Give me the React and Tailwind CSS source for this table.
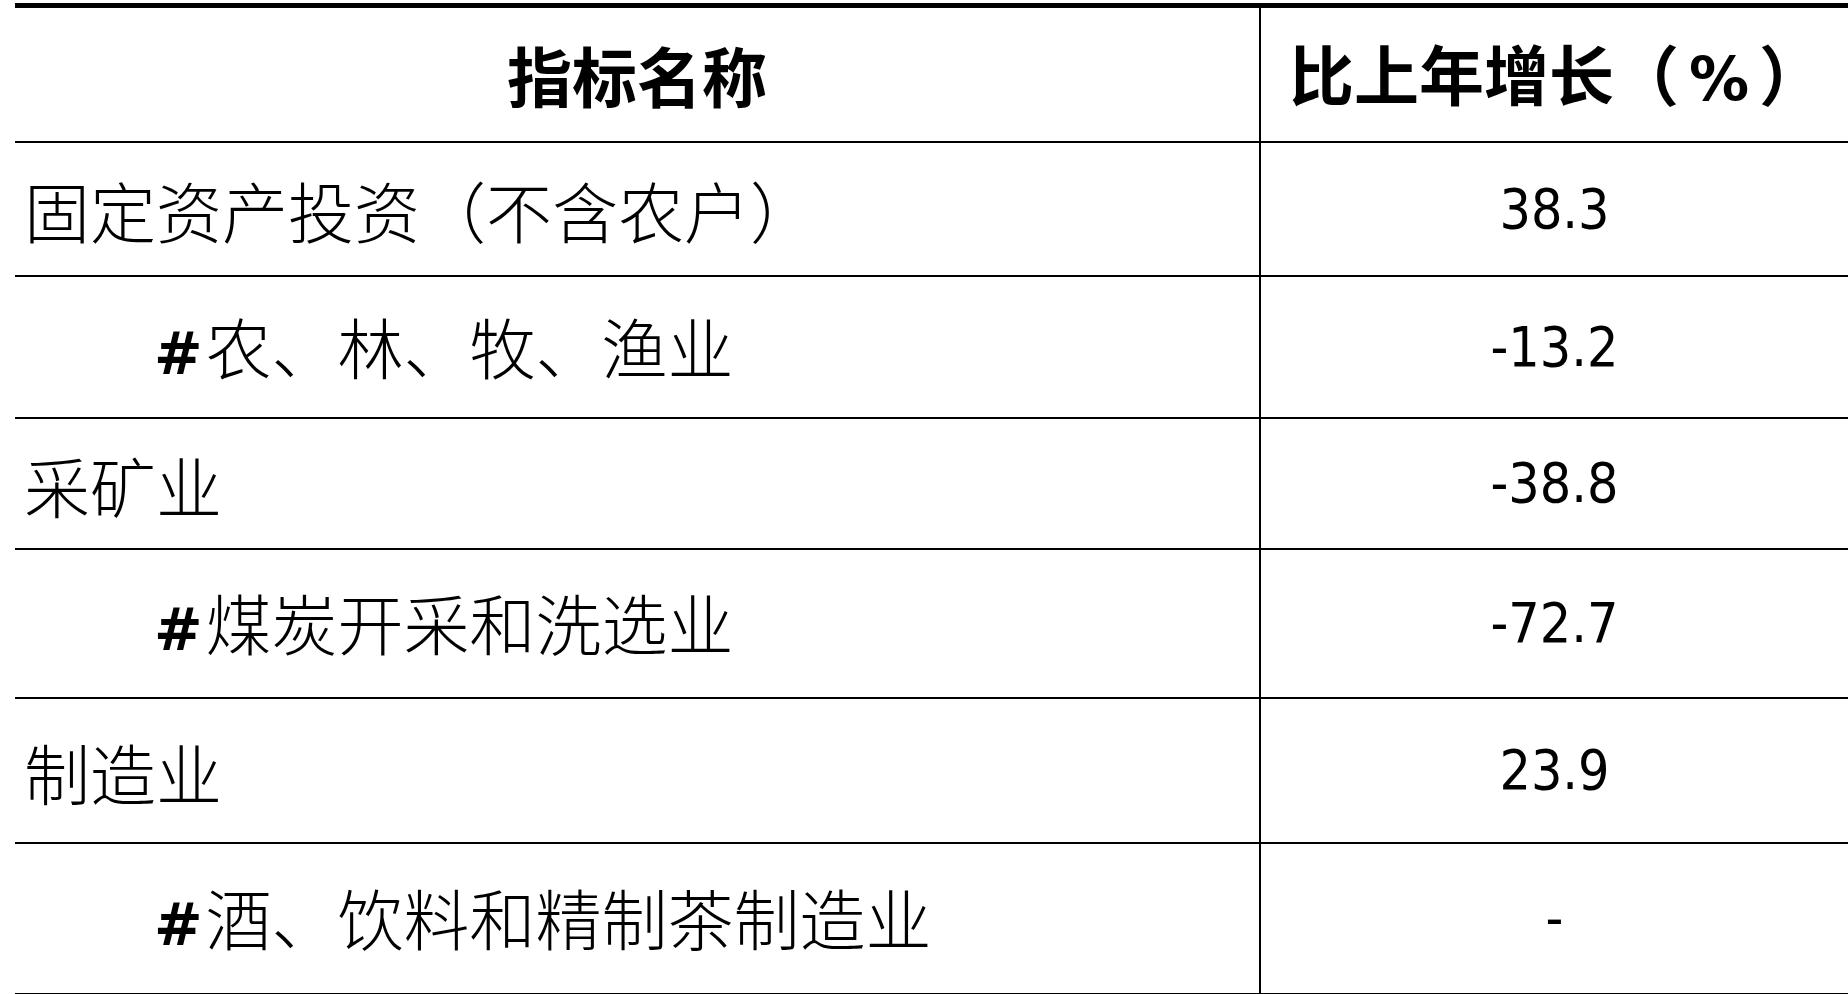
import React from "react";

const rows = [
  { name: "固定资产投资（不含农户）", value: "38.3", h: "h-[134px]" },
  { name: "农、林、牧、渔业", value: "-13.2", sub: true, h: "h-[142px]" },
  { name: "采矿业", value: "-38.8", h: "h-[131px]" },
  { name: "煤炭开采和洗选业", value: "-72.7", sub: true, h: "h-[149px]" },
  { name: "制造业", value: "23.9", h: "h-[145px]" },
  { name: "酒、饮料和精制茶制造业", value: "-", sub: true, h: "h-[151px]" },
];

const cjk = "font-['Noto_Sans_CJK_SC',sans-serif]";
const num = "font-['DejaVu_Sans_Condensed','DejaVu_Sans',sans-serif]";

const Row = ({ row }) => (
  <div className={`flex border-b-2 border-black ${row.h}`}>
    <div className="w-[1246px] border-r-2 border-black flex items-center pl-[9px]">
      <p className={`${cjk} text-[66px] font-light text-black leading-none`}>
        {row.sub && (
          <span className="inline-block w-[130px]" />
        )}
        {row.sub && (
          <span className="font-['DejaVu_Sans',sans-serif] font-bold text-[58px] mr-[3px]">
            #
          </span>
        )}
        {row.name}
      </p>
    </div>
    <div className="flex-1 flex items-center justify-center">
      <span className={`${num} text-[55px] text-black leading-none`}>
        {row.value}
      </span>
    </div>
  </div>
);

export default function App() {
  return (
    <div className="w-[1848px] h-[994px] bg-white overflow-hidden pt-[3px] pl-[15px]">
      <div className="border-t-[5px] border-black">
        <div className="flex border-b-2 border-black h-[135px]">
          <div className="w-[1246px] border-r-2 border-black flex items-center justify-center">
            <p className={`${cjk} text-[65px] font-bold text-black leading-none`}>
              指标名称
            </p>
          </div>
          <div className="flex-1 flex items-center justify-center pl-[4px]">
            <p className={`${cjk} text-[65px] font-bold text-black leading-none`}>
              比上年增长（
              <span className="font-['DejaVu_Sans',sans-serif] text-[60px] mx-[10px]">%</span>
              ）
            </p>
          </div>
        </div>
        {rows.map((row) => (
          <Row key={row.name} row={row} />
        ))}
      </div>
    </div>
  );
}
